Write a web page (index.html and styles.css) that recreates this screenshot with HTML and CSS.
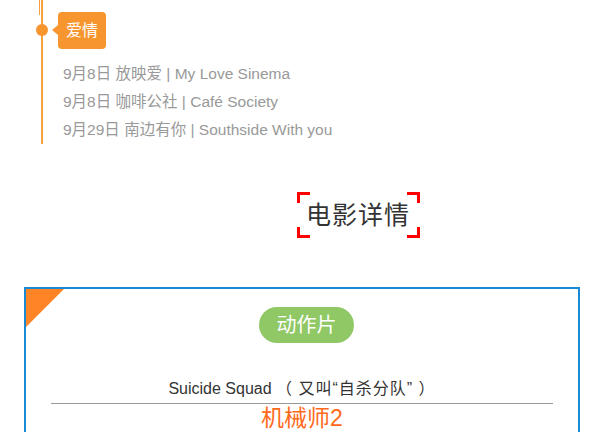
FILE: index.html
```html
<!DOCTYPE html>
<html lang="zh-CN">
<head>
<meta charset="utf-8">
<title>电影详情</title>
<link rel="stylesheet" href="styles.css">
</head>
<body>
  <section class="timeline">
    <span class="dot"></span>
    <div class="tag">爱情</div>
    <ul class="films">
      <li>9月8日 放映爱 | My Love Sinema</li>
      <li>9月8日 咖啡公社 | Café Society</li>
      <li>9月29日 南边有你 | Southside With you</li>
    </ul>
  </section>

  <div class="heading-wrap">
    <h2 class="heading">电影详情</h2>
  </div>

  <section class="card">
    <span class="corner"></span>
    <div class="pill">动作片</div>
    <p class="movie">Suicide Squad <span class="alias">（ 又叫“自杀分队” ）</span></p>
    <p class="next">机械师2</p>
  </section>
</body>
</html>
```

FILE: styles.css
```css
* { box-sizing: border-box; }

html, body {
  margin: 0;
  padding: 0;
  background: #fff;
  font-family: "Liberation Sans", "Noto Sans CJK SC", sans-serif;
}

body { overflow: hidden; height: 432px; }

.timeline {
  position: relative;
  margin-left: 41px;
  border-left: 2px solid #f7a13c;
  padding-left: 15px;
  padding-top: 12px;
  height: 144px;
}

.timeline::before {
  content: "";
  position: absolute;
  left: -4px;
  top: 0;
  width: 1px;
  height: 15px;
  background: #f7a13c;
}

.dot {
  position: absolute;
  left: -7px;
  top: 24px;
  width: 12px;
  height: 12px;
  border-radius: 50%;
  background: #f7952f;
}

.tag {
  position: relative;
  width: 48px;
  height: 37px;
  line-height: 37px;
  text-align: center;
  background: #f7952f;
  color: #fff;
  font-size: 16px;
  border-radius: 4px;
}

.tag::before {
  content: "";
  position: absolute;
  left: -6px;
  top: 13px;
  border-top: 5px solid transparent;
  border-bottom: 5px solid transparent;
  border-right: 6px solid #f7952f;
}

.films {
  list-style: none;
  margin: 11px 0 0 5px;
  padding: 0;
  color: #999;
  font-size: 15.5px;
  line-height: 28px;
}

.heading-wrap {
  margin-top: 48px;
  padding-left: 297px;
}

.heading {
  margin: 0;
  width: 123px;
  height: 46px;
  padding-left: 9px;
  line-height: 46px;
  font-size: 25px;
  letter-spacing: 1px;
  font-weight: normal;
  color: #333;
  background:
    linear-gradient(#f00, #f00) left top / 13px 3px no-repeat,
    linear-gradient(#f00, #f00) left top / 3px 11px no-repeat,
    linear-gradient(#f00, #f00) right top / 13px 3px no-repeat,
    linear-gradient(#f00, #f00) right top / 3px 11px no-repeat,
    linear-gradient(#f00, #f00) left bottom / 13px 3px no-repeat,
    linear-gradient(#f00, #f00) left bottom / 3px 11px no-repeat,
    linear-gradient(#f00, #f00) right bottom / 13px 3px no-repeat,
    linear-gradient(#f00, #f00) right bottom / 3px 11px no-repeat;
}

.card {
  position: relative;
  margin-top: 49px;
  margin-left: 24px;
  width: 556px;
  height: 200px;
  border: 2px solid #1a8ad4;
  padding-top: 18px;
}

.corner {
  position: absolute;
  left: 0;
  top: 0;
  width: 0;
  height: 0;
  border-top: 38px solid #ff8426;
  border-right: 38px solid transparent;
}

.pill {
  margin-left: 233px;
  width: 95px;
  height: 36px;
  line-height: 36px;
  border-radius: 18px;
  background: #8fc865;
  color: #fff;
  font-size: 20px;
  text-align: center;
}

.movie {
  margin: 36px 25px 0;
  padding-bottom: 4px;
  border-bottom: 1px solid #999;
  text-align: center;
  font-size: 16px;
  line-height: 20px;
  color: #333;
}

.alias { letter-spacing: 1px; }

.next {
  margin: 0;
  text-align: center;
  font-size: 23px;
  line-height: 28px;
  color: #ff6a1a;
}
```
